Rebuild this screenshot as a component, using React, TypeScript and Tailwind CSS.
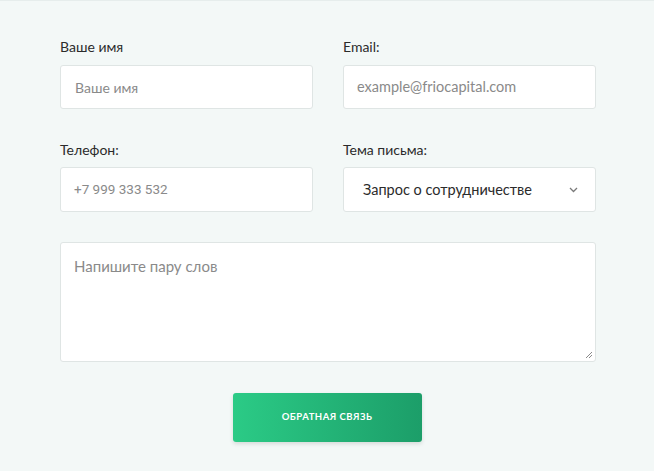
import React from "react";

const font = { fontFamily: "Lato, 'Open Sans', sans-serif" };

export default function App() {
  return (
    <div
      className="w-[654px] h-[471px] bg-[#f3f8f7] border-t border-[#e6edec] overflow-hidden"
      style={font}
    >
      <div className="w-[536px] ml-[60px] pt-[36px]">
        <div className="grid grid-cols-2 gap-x-[30px]">
          <div className="flex flex-col">
            <label className="text-[14px] leading-[20px] text-[#2b2b2b] mb-[8px]">Ваше имя</label>
            <div className="h-[44px] bg-white border border-[#dfe5e4] rounded-[3px] flex items-center pl-[14px] text-[14px] text-[#8a8a8a]">
              Ваше имя
            </div>
          </div>
          <div className="flex flex-col">
            <label className="text-[14px] leading-[20px] text-[#2b2b2b] mb-[8px]">Email:</label>
            <div className="h-[44px] bg-white border border-[#dfe5e4] rounded-[3px] flex items-center pl-[13px] text-[14.5px] text-[#8a8a8a]">
              example@friocapital.com
            </div>
          </div>
        </div>

        <div className="grid grid-cols-2 gap-x-[30px] mt-[31px]">
          <div className="flex flex-col">
            <label className="text-[14px] leading-[20px] text-[#2b2b2b] mb-[7px]">Телефон:</label>
            <div
              className="h-[45px] bg-white border border-[#dfe5e4] rounded-[3px] flex items-center pl-[13px] text-[13.5px] text-[#8a8a8a]"
              style={{ fontFamily: "Roboto, sans-serif" }}
            >
              +7 999 333 532
            </div>
          </div>
          <div className="flex flex-col">
            <label className="text-[14px] leading-[20px] text-[#2b2b2b] mb-[7px]">Тема письма:</label>
            <div className="h-[45px] bg-white border border-[#dfe5e4] rounded-[3px] flex items-center justify-between pl-[19px] pr-[17px] text-[14.5px] text-[#2b2b2b]">
              <span>Запрос о сотрудничестве</span>
              <svg width="9" height="6" viewBox="0 0 9 6" fill="none">
                <path d="M1 1l3.5 3.5L8 1" stroke="#7a7a7a" strokeWidth="1.3" />
              </svg>
            </div>
          </div>
        </div>

        <div className="relative mt-[30px] h-[120px] bg-white border border-[#dfe5e4] rounded-[3px] pl-[13px] pt-[12px] text-[15px] text-[#8a8a8a]">
          Напишите пару слов
          <svg className="absolute right-[2px] bottom-[2px]" width="8" height="8" viewBox="0 0 8 8">
            <path d="M7 1L1 7M7 4L4 7" stroke="#8a8a8a" strokeWidth="1" />
          </svg>
        </div>

        <div className="flex justify-center mt-[31px]">
          <button className="ml-[-2px] w-[189px] h-[49px] rounded-[3px] bg-gradient-to-r from-[#2bcb86] to-[#1c9e69] shadow-[0_2px_4px_rgba(0,0,0,0.12)] text-white text-[9.5px] font-bold tracking-[0.5px] uppercase">
            Обратная связь
          </button>
        </div>
      </div>
    </div>
  );
}
